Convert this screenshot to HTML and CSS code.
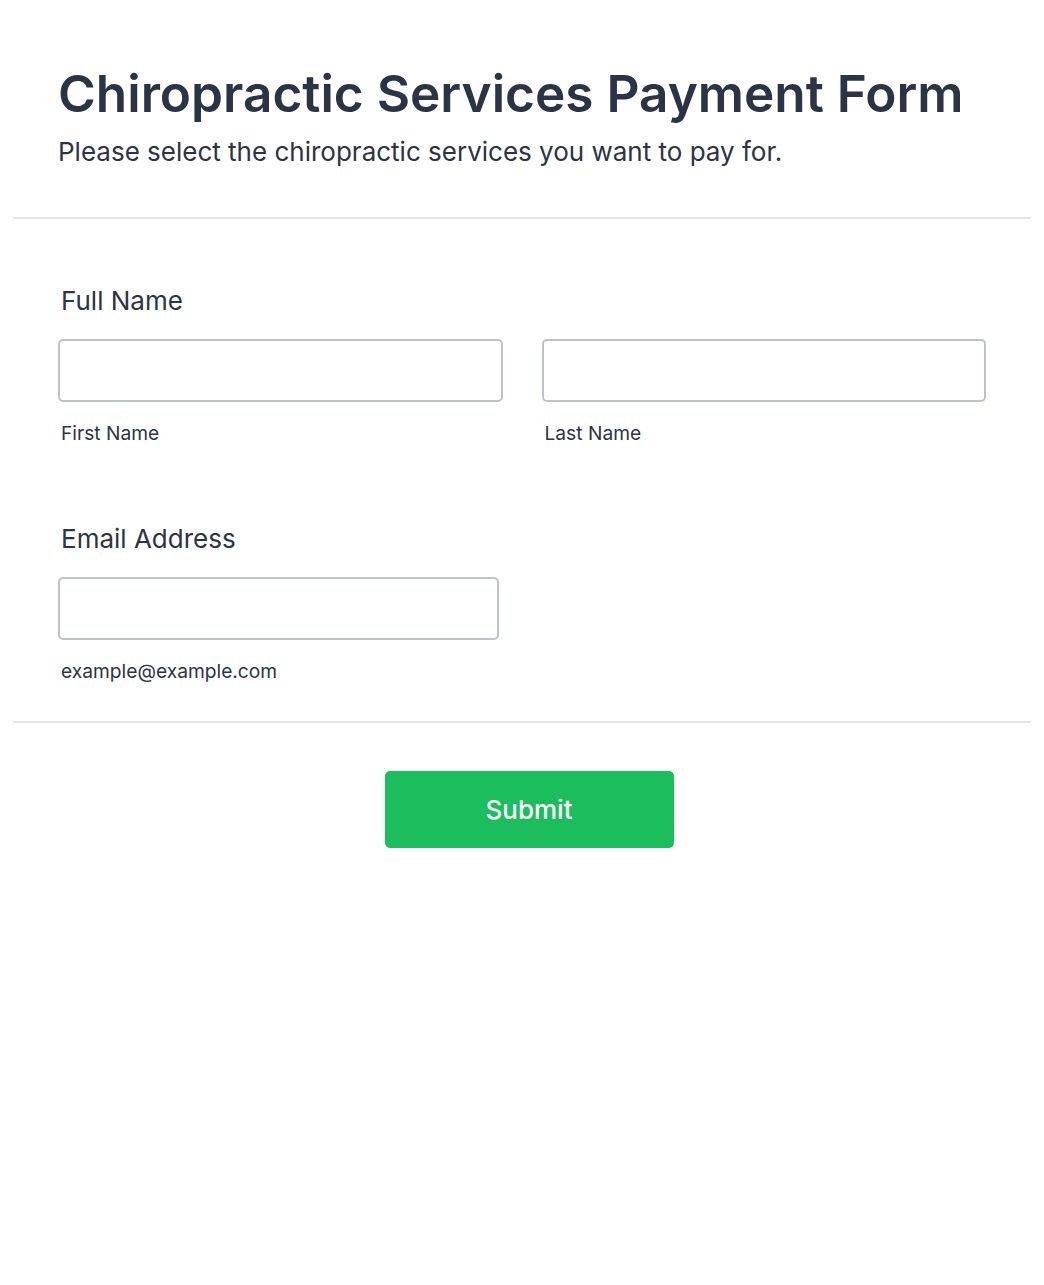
FILE: index.html
```html
<!DOCTYPE html>
<html lang="en">
<head>
    <meta charset="UTF-8">
    <meta name="viewport" content="width=device-width, initial-scale=1.0">
    <title>Chiropractic Services Payment Form</title>
    <link rel="stylesheet" href="styles.css">
</head>
<body>
    <div class="form-card">
        <!-- Form header -->
        <div class="form-header">
            <h1>Chiropractic Services Payment Form</h1>
            <p class="subheader">Please select the chiropractic services you want to pay for.</p>
        </div>

        <form class="form-body" onsubmit="event.preventDefault()">
            <div class="form-line">
                <label class="form-label">Full Name</label>
                <div class="name-row">
                    <div class="sub-field">
                        <input type="text" id="first-name">
                        <label class="sublabel" for="first-name">First Name</label>
                    </div>
                    <div class="sub-field">
                        <input type="text" id="last-name">
                        <label class="sublabel" for="last-name">Last Name</label>
                    </div>
                </div>
            </div>

            <div class="form-line">
                <label class="form-label" for="email">Email Address</label>
                <div class="sub-field email-field">
                    <input type="email" id="email">
                    <label class="sublabel" for="email">example@example.com</label>
                </div>
            </div>

            <div class="form-actions">
                <button type="submit">Submit</button>
            </div>
        </form>
    </div>
</body>
</html>
```

FILE: styles.css
```css
body {
    font-family: Inter, "Noto Sans", sans-serif;
    margin: 0;
    padding: 0 13px;
    background-color: #fff;
    color: #2c3345;
}
.form-card {
    background-color: #fff;
}
.form-header {
    padding: 62px 45px 50px;
    border-bottom: 2px solid #e3e5ea;
}
.form-header h1 {
    font-size: 51.3px;
    font-weight: 600;
    line-height: 62px;
    margin: 0;
}
.subheader {
    font-size: 26px;
    line-height: 30px;
    margin: 13px 0 0;
}
.form-body {
    padding: 0 45px;
}
.form-line {
    padding-top: 66px;
}
.form-line + .form-line {
    padding-top: 78px;
}
.form-label {
    display: block;
    font-size: 26px;
    font-weight: 400;
    line-height: 32px;
    margin: 0 0 22px 3px;
}
.name-row {
    display: flex;
    gap: 39px;
}
.sub-field {
    flex: 1;
}
.email-field {
    width: 441px;
}
input[type="text"],
input[type="email"] {
    display: block;
    width: 100%;
    height: 63px;
    border: 2px solid #bdc1cc;
    border-radius: 5px;
    box-sizing: border-box;
    font-size: 18px;
    padding: 0 14px;
}
.sublabel {
    display: block;
    font-size: 19.2px;
    line-height: 24px;
    margin: 19px 0 0 3px;
}
.form-actions {
    margin: 38px -45px 0;
    padding: 48px 0 0 14px;
    border-top: 2px solid #e3e5ea;
    text-align: center;
}
button {
    background-color: #1bbd5c;
    color: #fff;
    font-family: inherit;
    font-size: 26px;
    font-weight: 500;
    width: 289px;
    height: 77px;
    border: none;
    border-radius: 5px;
    cursor: pointer;
}
button:hover {
    background-color: #17a851;
}
```
